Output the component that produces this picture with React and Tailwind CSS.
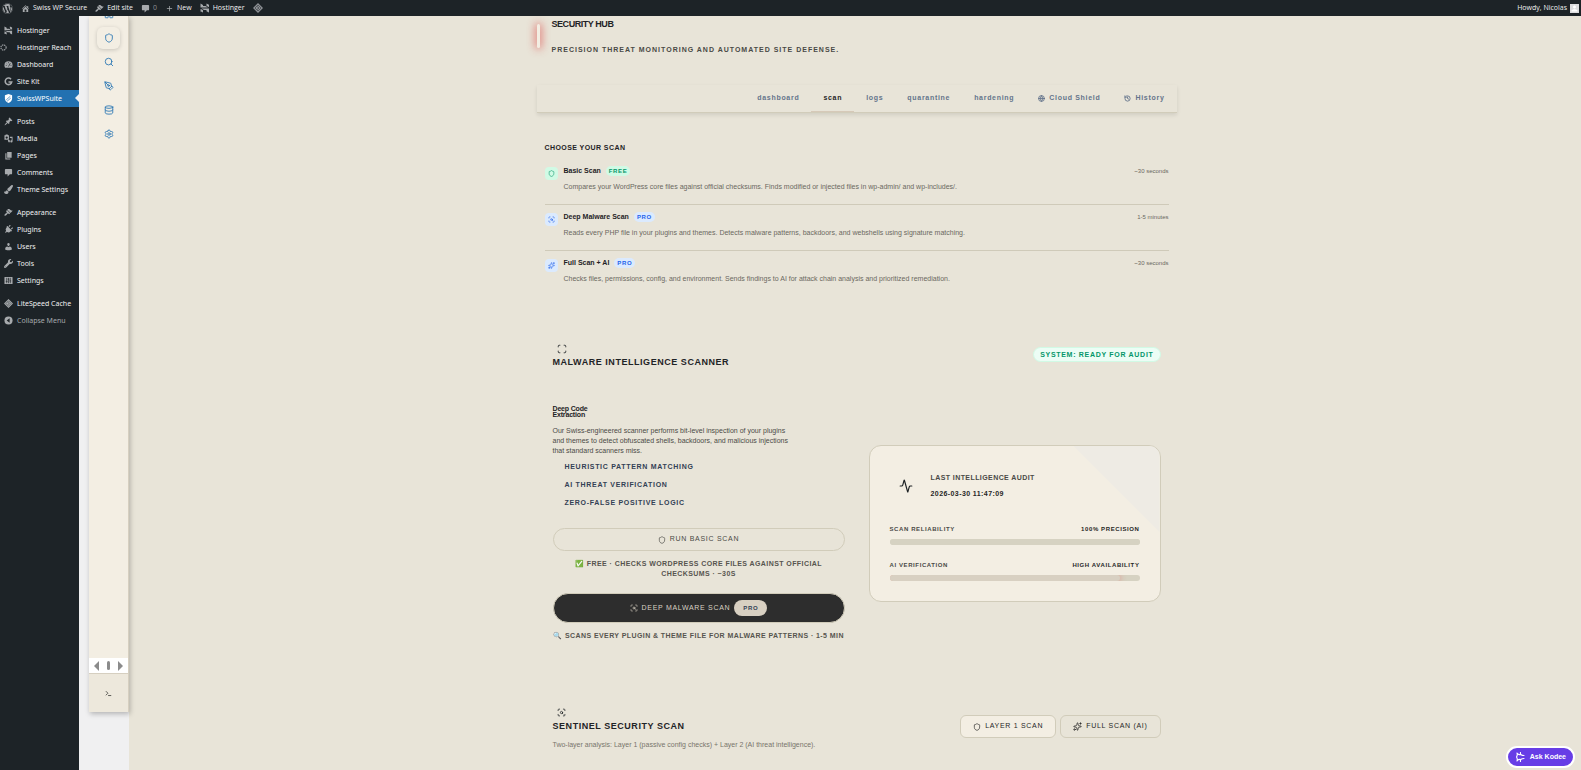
import React from "react";
import {
    Activity,
    Database,
    Globe,
    History,
    LayoutGrid,
    PenTool,
    Scan,
    ScanSearch,
    Search,
    Settings,
    Shield,
    Sparkles,
    Terminal,
} from "lucide-react";
import { FaWordpress, FaPlug, FaPaintBrush, FaWrench } from "react-icons/fa";
import { MdAdd, MdPerson } from "react-icons/md";

const HostingerIcon = ({ className }) => (
    <svg className={className} viewBox="0 0 20 20" fill="currentColor">
        <path d="M1 1v8l15 .1-5-2.9H6V3.800zM13 1v4.600l5 3V3.500zM1 19v-8.200l5 .1 9-.1-4.600.1H3l5 2.900h5v2.500l5 2.700v-8.200H1.200zM1 16.500 6 19v-4.700l-5-2.700z" />
    </svg>
);

const ReachIcon = ({ className }) => (
    <svg
        className={className}
        viewBox="0 0 20 20"
        fill="none"
        stroke="currentColor"
        strokeWidth="3"
        strokeDasharray="4 2"
    >
        <circle cx="10" cy="10" r="7.500" />
    </svg>
);

const HomeIcon = ({ className }) => (
    <svg className={className} viewBox="0 0 20 20" fill="currentColor">
        <path d="M16 8.500l1.530 1.530-1.060 1.060L10 4.600l-6.470 6.470-1.060-1.060L10 2.500l4 4v-2h2v4zm-6-2.460l6 5.990V18H4v-5.970zM12 17v-5H8v5h4z" />
    </svg>
);

const GaugeIcon = ({ className }) => (
    <svg className={className} viewBox="0 0 20 20">
        <path
            d="M10 3a9 9 0 0 0-9 9c0 2 .6 3.500 1.500 5h15c.9-1.500 1.500-3 1.500-5a9 9 0 0 0-9-9z"
            fill="currentColor"
        />
        <path
            d="M10 14.500 14 7M4 12h2M6 7.500l1.200 1.200M10 5v2M14.500 12h2"
            stroke="#1d2327"
            strokeWidth="1.600"
        />
    </svg>
);

const SiteKitIcon = ({ className }) => (
    <svg
        className={className}
        viewBox="0 0 20 20"
        fill="none"
        stroke="currentColor"
        strokeWidth="3.500"
    >
        <path d="M15.500 4.800A7.300 7.300 0 1 0 17.200 11H10" />
    </svg>
);

const SuiteIcon = ({ className }) => (
    <svg className={className} viewBox="0 0 20 20">
        <path
            d="M10 0 18 3v7c0 5-3.500 8-8 10-4.500-2-8-5-8-10V3z"
            fill="currentColor"
        />
        <path
            d="M5 13 14 5M7 16l8-7"
            stroke="#2271b1"
            strokeWidth="1.500"
            fill="none"
        />
    </svg>
);

const PinIcon = ({ className }) => (
    <svg className={className} viewBox="0 0 20 20" fill="currentColor">
        <path d="M10.440 3.020l1.820-1.820 6.360 6.350-1.830 1.820c-1.050-.68-2.480-.57-3.410.36l-.75.75c-.92.93-1.040 2.350-.35 3.410l-1.830 1.820-2.410-2.410-2.800 2.790c-.42.42-3.380 2.710-3.800 2.290s1.860-3.390 2.280-3.810l2.790-2.790L4.100 9.360l1.830-1.820c1.050.69 2.480.57 3.400-.36l.75-.75c.93-.92 1.050-2.350.36-3.410z" />
    </svg>
);

const MediaIcon = ({ className }) => (
    <svg className={className} viewBox="0 0 20 20" fill="currentColor">
        <path
            fillRule="evenodd"
            d="M1 3h2l1-2h4l1 2h2v10H1zm5 2.500a2.500 2.500 0 1 0 0 5 2.500 2.500 0 0 0 0-5z"
        />
        <path d="M13 6h6v10.500a2.500 2.500 0 1 1-2-2.400V9h-4zM8.500 14.500a2.300 2.300 0 1 1 4.500 1v3h-3z" />
    </svg>
);

const PagesIcon = ({ className }) => (
    <svg className={className} viewBox="0 0 20 20" fill="currentColor">
        <path d="M7 2h10v13H7zM3 5h2.500v11.500H14V19H3z" />
    </svg>
);

const CommentIcon = ({ className }) => (
    <svg className={className} viewBox="0 0 20 20" fill="currentColor">
        <path d="M4 2h12q2 0 2 2v8q0 2-2 2h-3l-5 5v-5H4q-2 0-2-2V4q0-2 2-2z" />
    </svg>
);

const AppearanceIcon = ({ className }) => (
    <svg className={className} viewBox="0 0 20 20" fill="currentColor">
        <path d="M14.480 11.060L7.410 3.990l1.500-1.500c.5-.56 2.300-.47 3.510.32 1.210.8 1.430 1.280 2.910 2.100 1.180.64 2.450 1.260 4.450.85zm-.71.71L6.700 4.700 4.930 6.470c-.39.39-.39 1.020 0 1.410l1.060 1.060c.39.39.39 1.030 0 1.420-.6.6-1.430 1.110-2.210 1.690-.35.26-.7.53-1.010.84C1.430 14.230.4 16.080 1.400 17.070c.99 1 2.840-.03 4.180-1.360.31-.31.58-.66.85-1.020.57-.78 1.080-1.610 1.690-2.210.39-.39 1.020-.39 1.410 0l1.060 1.060c.39.39 1.020.39 1.410 0z" />
    </svg>
);

const PlugIcon = ({ className }) => (
    <FaPlug className={`${className} rotate-45`} />
);

const UserIcon = ({ className }) => (
    <svg className={className} viewBox="0 0 20 20" fill="currentColor">
        <path d="M10 9.250c-2.270 0-2.730-3.440-2.730-3.440C7 4.020 7.820 2 9.970 2c2.160 0 2.980 2.020 2.710 3.810 0 0-.41 3.440-2.680 3.440zm0 2.570L12.720 10c2.390 0 4.520 2.330 4.520 4.530v2.490s-3.650 1.130-7.240 1.130c-3.650 0-7.240-1.130-7.240-1.130v-2.490c0-2.250 1.940-4.480 4.470-4.480z" />
    </svg>
);

const SlidersIcon = ({ className }) => (
    <svg className={className} viewBox="0 0 20 20">
        <rect x="1" y="2" width="18" height="16" rx="1" fill="currentColor" />
        <path
            d="M6 4v12M10 4v12M14 4v12M4 12h4M8 7h4M12 11h4"
            stroke="#1d2327"
            strokeWidth="1.500"
        />
    </svg>
);

const LiteSpeedIcon = ({ className }) => (
    <svg className={className} viewBox="0 0 20 20">
        <path d="M10 0 20 10 10 20 0 10z" fill="currentColor" />
        <path
            d="M10 4 16 10 10 16 4 10zM8 7l4 3-4 3"
            stroke="#1d2327"
            strokeWidth="1"
            fill="none"
        />
    </svg>
);

const CollapseIcon = ({ className }) => (
    <svg className={className} viewBox="0 0 20 20">
        <circle cx="10" cy="10" r="9" fill="currentColor" />
        <path d="M12.500 5v10L6 10z" fill="#1d2327" />
    </svg>
);

const KodeeIcon = ({ className }) => (
    <svg
        className={className}
        viewBox="0 0 20 20"
        fill="none"
        stroke="currentColor"
        strokeWidth="2.200"
        strokeLinecap="round"
        strokeLinejoin="round"
    >
        <path d="M4 2c1 3 1 5-1 8 2 3 2 5 1 8M4 2c2 3 4 4 7 3M4 18c2-3 4-4 7-3M11 1c-1 4 2 6 7 6M11 19c-1-4 2-6 7-6" />
    </svg>
);

const menuGroups = [
    [
        { label: "Hostinger", icon: HostingerIcon },
        { label: "Hostinger Reach", icon: ReachIcon, flush: true },
        { label: "Dashboard", icon: GaugeIcon },
        { label: "Site Kit", icon: SiteKitIcon },
        { label: "SwissWPSuite", icon: SuiteIcon, current: true },
    ],
    [
        { label: "Posts", icon: PinIcon },
        { label: "Media", icon: MediaIcon },
        { label: "Pages", icon: PagesIcon },
        { label: "Comments", icon: CommentIcon },
        { label: "Theme Settings", icon: FaPaintBrush },
    ],
    [
        { label: "Appearance", icon: AppearanceIcon },
        { label: "Plugins", icon: PlugIcon },
        { label: "Users", icon: UserIcon },
        { label: "Tools", icon: FaWrench },
        { label: "Settings", icon: SlidersIcon },
    ],
    [{ label: "LiteSpeed Cache", icon: LiteSpeedIcon }],
];

const railItems = [
    { label: "Overview", icon: LayoutGrid },
    { label: "Security", icon: Shield, current: true },
    { label: "Search", icon: Search },
    { label: "Content", icon: PenTool },
    { label: "Database", icon: Database },
    { label: "Settings", icon: Settings },
];

const tabs = [
    { label: "dashboard" },
    { label: "scan", current: true },
    { label: "logs" },
    { label: "quarantine" },
    { label: "hardening" },
    { label: "Cloud Shield", icon: Globe },
    { label: "History", icon: History },
];

const scans = [
    {
        name: "Basic Scan",
        badge: "FREE",
        time: "~30 seconds",
        icon: Shield,
        tone: "bg-[#d1fae5] text-[#059669]",
        description:
            "Compares your WordPress core files against official checksums. Finds modified or injected files in wp-admin/ and wp-includes/.",
    },
    {
        name: "Deep Malware Scan",
        badge: "PRO",
        time: "1-5 minutes",
        icon: ScanSearch,
        tone: "bg-[#dbeafe] text-[#2563eb]",
        description:
            "Reads every PHP file in your plugins and themes. Detects malware patterns, backdoors, and webshells using signature matching.",
    },
    {
        name: "Full Scan + AI",
        badge: "PRO",
        time: "~30 seconds",
        icon: Sparkles,
        tone: "bg-[#dbeafe] text-[#2563eb]",
        description:
            "Checks files, permissions, config, and environment. Sends findings to AI for attack chain analysis and prioritized remediation.",
    },
];

const AdminBar = () => (
    <header className="flex h-4 shrink-0 items-center justify-between bg-[#1d2327] pl-[2px] pr-[2px] font-['Open_Sans',sans-serif] text-[7px] leading-4 text-[#f0f0f1]">
        <div className="flex items-center gap-2">
            <a href="#wp" aria-label="WordPress">
                <FaWordpress className="size-[11px] text-[#a7aaad]" />
            </a>
            <a href="#site" className="flex items-center gap-[3px]">
                <HomeIcon className="size-[9px] text-[#a7aaad]" />
                Swiss WP Secure
            </a>
            <a href="#edit" className="flex items-center gap-[3px]">
                <AppearanceIcon className="size-[9px] text-[#a7aaad]" />
                Edit site
            </a>
            <a
                href="#comments"
                className="flex items-center gap-[3px] text-[#8c8f94]"
            >
                <CommentIcon className="size-[9px] text-[#a7aaad]" />0
            </a>
            <a href="#new" className="flex items-center gap-[3px]">
                <MdAdd className="size-[9px] text-[#a7aaad]" />
                New
            </a>
            <a href="#hostinger" className="flex items-center gap-[3px]">
                <HostingerIcon className="size-[10px] text-[#a7aaad]" />
                Hostinger
            </a>
            <a href="#litespeed" aria-label="LiteSpeed">
                <LiteSpeedIcon className="size-[10px] text-[#8c8f94]" />
            </a>
        </div>
        <a href="#profile" className="flex items-center gap-[3px]">
            Howdy, Nicolas
            <span className="flex size-[9px] items-end justify-center bg-[#dcdcde] text-white">
                <MdPerson className="size-[9px]" />
            </span>
        </a>
    </header>
);

const AdminMenu = () => (
    <nav className="flex w-[79px] shrink-0 flex-col gap-[6px] bg-[#1d2327] pt-[6px] font-['Noto_Sans',sans-serif] text-[7px] leading-[17px] text-[#f0f0f1]">
        {menuGroups.map((group, i) => (
            <ul key={i}>
                {group.map((item) => (
                    <li key={item.label}>
                        <a
                            href="#menu"
                            className={`relative flex h-[17px] items-center gap-1 whitespace-nowrap ${
                                item.flush ? "pl-0" : "pl-1"
                            } ${item.current ? "bg-[#2271b1] text-white" : ""}`}
                        >
                            <span
                                className={`flex shrink-0 ${
                                    item.flush ? "w-[13px]" : "w-[9px]"
                                } ${
                                    item.current
                                        ? "text-white"
                                        : "text-[#a7aaad]"
                                }`}
                            >
                                <item.icon
                                    className={
                                        item.flush ? "size-[7px]" : "size-[9px]"
                                    }
                                />
                            </span>
                            {item.label}
                            {item.current && (
                                <span className="absolute right-0 top-1 border-y-4 border-r-4 border-y-transparent border-r-[#f0f0f1]" />
                            )}
                        </a>
                    </li>
                ))}
                {i === menuGroups.length - 1 && (
                    <li>
                        <button
                            type="button"
                            className="flex h-[17px] items-center gap-1 whitespace-nowrap pl-1 text-[#a7aaad]"
                        >
                            <CollapseIcon className="size-[9px]" />
                            Collapse Menu
                        </button>
                    </li>
                )}
            </ul>
        ))}
    </nav>
);

const Rail = () => (
    <aside className="z-10 mb-[58px] ml-[10px] flex w-10 shrink-0 flex-col border-r border-[#d6cfc0] bg-[#f3eee3] shadow-[1px_2px_5px_rgba(0,0,0,0.25)]">
        <div className="flex-1 overflow-hidden">
            <div className="-mt-[13px] flex flex-col items-center gap-[2px]">
                {railItems.map(({ label, icon: Icon, current }) => (
                    <a
                        key={label}
                        href="#rail"
                        aria-label={label}
                        className={`flex h-[22px] w-[23px] items-center justify-center rounded-md text-[#2271b1] ${
                            current ? "shadow-[0_1px_4px_rgba(0,0,0,0.18)]" : ""
                        }`}
                    >
                        <Icon className="size-[10px]" strokeWidth={2} />
                    </a>
                ))}
            </div>
        </div>
        <div className="flex h-[15px] items-center justify-between bg-white px-[5px] text-[#8b8b8b]">
            <span className="border-y-[5px] border-r-[5px] border-y-transparent border-r-current" />
            <span className="h-[9px] w-[3px] rounded-sm bg-current" />
            <span className="border-y-[5px] border-l-[5px] border-y-transparent border-l-current" />
        </div>
        <button
            type="button"
            aria-label="Terminal"
            className="flex h-[39px] items-center justify-center border-t border-[#d6cfc0] bg-[#ede8dc] text-[#4a4a46]"
        >
            <Terminal className="size-[7px]" strokeWidth={3} />
        </button>
    </aside>
);

const ScanChooser = () => (
    <section className="px-2 pt-[29px]">
        <h2 className="text-[7px] font-bold uppercase leading-3 tracking-[0.06em] text-[#1f2326]">
            Choose your scan
        </h2>
        <ul className="mt-[5px] divide-y divide-[#cfcab9]">
            {scans.map((scan) => (
                <li key={scan.name} className="flex gap-[6px] py-[7px]">
                    <span
                        className={`mt-[1px] flex size-[13px] shrink-0 items-center justify-center rounded ${scan.tone}`}
                    >
                        <scan.icon className="size-[7px]" />
                    </span>
                    <div className="flex-1">
                        <div className="flex h-[10px] items-center">
                            <h3 className="text-[7px] font-bold text-[#1f2326]">
                                {scan.name}
                            </h3>
                            <span
                                className={`ml-[5px] rounded-full px-[3px] text-[6px] font-bold leading-[10px] tracking-widest ${scan.tone}`}
                            >
                                {scan.badge}
                            </span>
                            <span className="ml-auto text-[6px] text-[#6b685f]">
                                {scan.time}
                            </span>
                        </div>
                        <p className="mt-1 pb-[3px] text-[7px] leading-[14px] text-[#6b685f]">
                            {scan.description}
                        </p>
                    </div>
                </li>
            ))}
        </ul>
    </section>
);

const Meter = ({ label, value, percent, glow }) => (
    <div>
        <div className="flex justify-between text-[6px] font-bold leading-[10px] tracking-widest">
            <span className="text-[#4a4a46]">{label}</span>
            <span className="text-[#262626]">{value}</span>
        </div>
        <div className="mt-[5px] h-[6px] overflow-hidden rounded-full bg-[#d6d2c2]">
            <div
                className={`h-full rounded-full ${
                    glow
                        ? "bg-[#d8d0c2] shadow-[0_0_6px_rgba(239,68,68,0.5)]"
                        : "bg-[#d6d2c2]"
                }`}
                style={{ width: `${percent}%` }}
            />
        </div>
    </div>
);

const AuditCard = () => (
    <div className="relative overflow-hidden rounded-xl border border-[#d1ccba] bg-[#f3eee3] px-5 pb-5 pt-[27px]">
        <div className="absolute right-0 top-0 size-[86px] bg-[#eeebe4] [clip-path:polygon(0_0,100%_0,100%_100%)]" />
        <div className="flex items-center gap-[18px] pl-[9px]">
            <Activity className="size-[14px] text-[#1f2326]" />
            <div className="text-[7px] font-bold leading-[10px] tracking-[0.06em]">
                <p className="text-[#4a4a46]">LAST INTELLIGENCE AUDIT</p>
                <p className="mt-[6px] text-[#262626]">2026-03-30 11:47:09</p>
            </div>
        </div>
        <div className="mt-[25px] flex flex-col gap-[15px]">
            <Meter
                label="SCAN RELIABILITY"
                value="100% PRECISION"
                percent={100}
            />
            <Meter
                label="AI VERIFICATION"
                value="HIGH AVAILABILITY"
                percent={92}
                glow
            />
        </div>
    </div>
);

const MalwareScanner = () => (
    <section className="px-4 pt-12">
        <div className="flex items-start justify-between">
            <div>
                <Scan className="ml-1 size-[10px] text-[#1f2326]" />
                <h2 className="mt-[2px] text-[9px] font-bold leading-3 tracking-[0.06em] text-[#1f2326]">
                    MALWARE INTELLIGENCE SCANNER
                </h2>
            </div>
            <span className="mt-[3px] rounded-full border border-[#d1fae5] bg-[#ecfdf5] px-[6px] text-[7px] font-bold leading-[13px] tracking-widest text-[#059669]">
                SYSTEM: READY FOR AUDIT
            </span>
        </div>
        <div className="mt-[38px] grid grid-cols-2 items-center gap-6">
            <div>
                <h3 className="text-[7px] font-bold leading-[6px] tracking-tight text-[#1f2326]">
                    Deep Code
                    <br />
                    Extraction
                </h3>
                <p className="mt-2 max-w-60 text-[7px] leading-[10px] text-[#4a4a46]">
                    Our Swiss-engineered scanner performs bit-level inspection
                    of your plugins and themes to detect obfuscated shells,
                    backdoors, and malicious injections that standard scanners
                    miss.
                </p>
                <ul className="mt-[6px] flex flex-col gap-2 pl-3 text-[7px] font-bold leading-[10px] tracking-widest text-[#334155]">
                    <li>HEURISTIC PATTERN MATCHING</li>
                    <li>AI THREAT VERIFICATION</li>
                    <li>ZERO-FALSE POSITIVE LOGIC</li>
                </ul>
                <button
                    type="button"
                    className="mt-5 flex h-[23px] w-full items-center justify-center gap-1 rounded-full border border-[#d1ccba] text-[7px] tracking-widest text-[#4a4a46]"
                >
                    <Shield className="size-2" />
                    RUN BASIC SCAN
                </button>
                <p className="mt-2 text-center text-[7px] font-bold leading-[10px] tracking-[0.06em] text-[#57554f]">
                    ✅ FREE · CHECKS WORDPRESS CORE FILES AGAINST OFFICIAL
                    <br />
                    CHECKSUMS · ~30S
                </p>
                <button
                    type="button"
                    className="mt-[14px] flex h-[30px] w-full items-center justify-center gap-1 rounded-full border border-[#d1ccba] bg-[#2d2d2d] text-[7px] tracking-widest text-[#d8d0c2]"
                >
                    <ScanSearch className="size-2" />
                    DEEP MALWARE SCAN
                    <span className="rounded-full bg-[#d8d0c2] px-[9px] text-[6px] font-bold leading-4 text-[#334155]">
                        PRO
                    </span>
                </button>
                <p className="mt-2 whitespace-nowrap text-center text-[7px] font-bold leading-[10px] tracking-[0.06em] text-[#57554f]">
                    🔍 SCANS EVERY PLUGIN &amp; THEME FILE FOR MALWARE PATTERNS
                    · 1-5 MIN
                </p>
            </div>
            <AuditCard />
        </div>
    </section>
);

const SentinelScan = () => (
    <section className="flex items-start justify-between px-4 pt-[67px]">
        <div>
            <ScanSearch className="ml-1 size-[9px] text-[#1f2326]" />
            <h2 className="mt-[3px] text-[9px] font-bold leading-3 tracking-[0.06em] text-[#1f2326]">
                SENTINEL SECURITY SCAN
            </h2>
            <p className="mt-[7px] text-[7px] leading-3 text-[#78756c]">
                Two-layer analysis: Layer 1 (passive config checks) + Layer 2
                (AI threat intelligence).
            </p>
        </div>
        <div className="mt-[7px] flex gap-1 text-[7px] tracking-widest text-[#262626]">
            <button
                type="button"
                className="flex h-[23px] items-center gap-1 rounded-md border border-[#d1ccba] bg-[#f3eee3] px-3"
            >
                <Shield className="size-2" />
                LAYER 1 SCAN
            </button>
            <button
                type="button"
                className="flex h-[23px] items-center gap-1 rounded-md border border-[#d1ccba] px-3"
            >
                <Sparkles className="size-[9px]" />
                FULL SCAN (AI)
            </button>
        </div>
    </section>
);

const App = () => {
    return (
        <div className="flex h-screen flex-col overflow-hidden bg-[#f0f0f1] font-['Liberation_Sans',Arial,sans-serif]">
            <AdminBar />
            <div className="flex min-h-0 flex-1">
                <AdminMenu />
                <Rail />
                <main className="min-w-0 flex-1 overflow-hidden bg-[#e8e4d8] pl-[3px]">
                    <div className="mx-auto max-w-[640px]">
                        <div className="flex items-start gap-3 pt-[2px]">
                            <span className="mt-[6px] h-6 w-[3px] shrink-0 rounded-full bg-[#f3eee3] shadow-[0_0_8px_1px_rgba(220,38,38,0.7)]" />
                            <div>
                                <h1 className="text-[9px] font-bold leading-3 tracking-tighter text-[#1f2326]">
                                    SECURITY HUB
                                </h1>
                                <p className="mt-[14px] text-[7px] font-bold leading-3 tracking-[1px] text-[#4a4a46]">
                                    PRECISION THREAT MONITORING AND AUTOMATED
                                    SITE DEFENSE.
                                </p>
                            </div>
                        </div>
                        <nav className="mt-[29px] flex h-7 justify-end border-b border-[#d1ccba] shadow-[0_2px_4px_rgba(0,0,0,0.1)]">
                            {tabs.map(({ label, icon: Icon, current }) => (
                                <a
                                    key={label}
                                    href="#tab"
                                    className={`flex items-center gap-1 border-b px-3 text-[7px] font-bold tracking-widest ${
                                        current
                                            ? "border-[#d6c9b8] text-[#262626]"
                                            : "border-transparent text-[#64748b]"
                                    }`}
                                >
                                    {Icon && (
                                        <Icon
                                            className="size-[7px]"
                                            strokeWidth={3}
                                        />
                                    )}
                                    {label}
                                </a>
                            ))}
                        </nav>
                        <ScanChooser />
                        <MalwareScanner />
                        <SentinelScan />
                    </div>
                </main>
            </div>
            <button
                type="button"
                className="fixed bottom-[2px] right-[6px] flex h-[22px] items-center gap-[5px] rounded-full border-2 border-white bg-[#673de6] px-[7px] text-[7px] font-bold text-white"
            >
                <KodeeIcon className="size-[10px]" />
                Ask Kodee
            </button>
        </div>
    );
};

export default App;
